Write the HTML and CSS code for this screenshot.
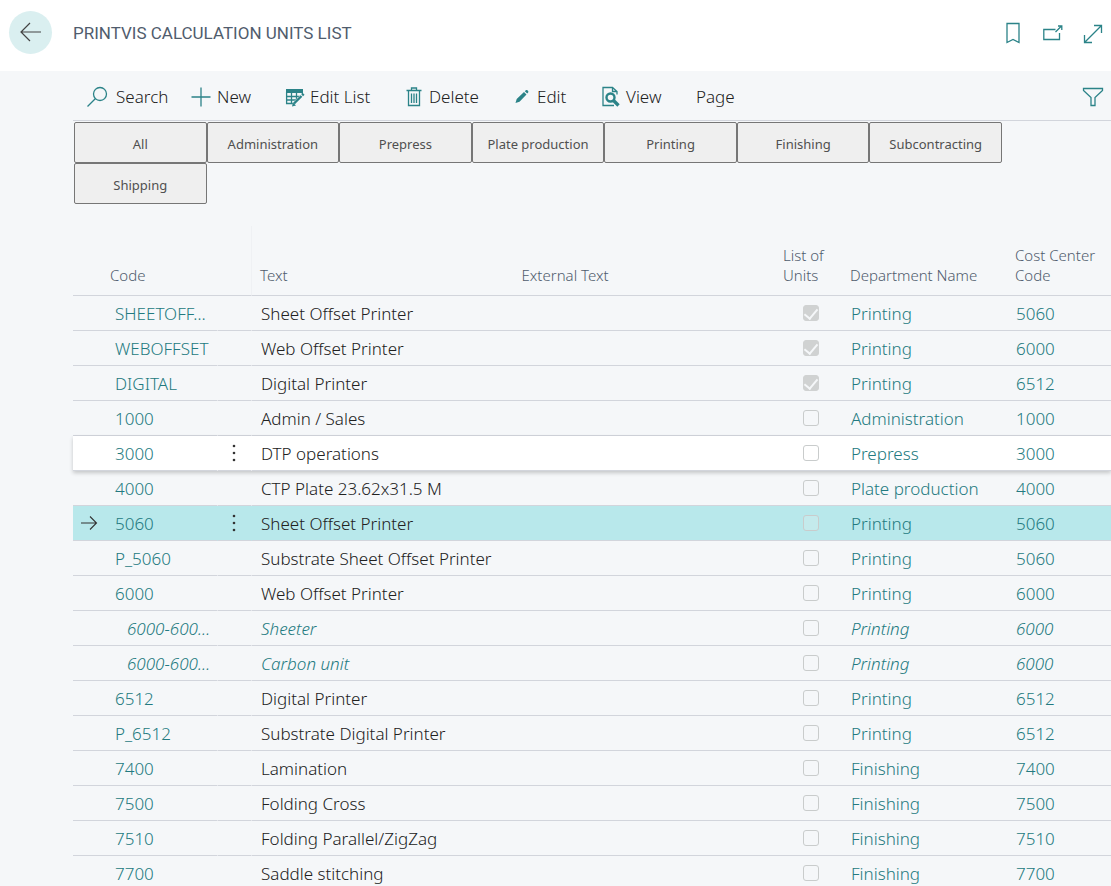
FILE: index.html
```html
<!DOCTYPE html>
<html lang="en">

<head>
    <meta charset="utf-8">
    <title>PrintVis Calculation Units List</title>
    <link rel="stylesheet" href="styles.css">
</head>

<body>
    <header class="page-header">
        <button class="back" aria-label="Back">
            <svg width="22" height="20" viewBox="0 0 22 20"><path d="M21 10H1.5M10 1L1 10l9 9" /></svg>
        </button>
        <h1>PRINTVIS CALCULATION UNITS LIST</h1>
        <div class="window-tools">
            <button aria-label="Bookmark">
                <svg width="20" height="22" viewBox="0 0 20 22"><path d="M4 1.5h12v19l-6-3-6 3z" /></svg>
            </button>
            <button aria-label="Open in new window">
                <svg width="20" height="22" viewBox="0 0 20 22"><path d="M12.500 7.500H.8v10h15.700v-6.500M12.500 10l6-6M15 4h3.800v4" /></svg>
            </button>
            <button aria-label="Expand">
                <svg width="20" height="22" viewBox="0 0 20 22"><path d="M2 20L18 4M11 3.500h7.500V11M1.500 13v7.500H9" /></svg>
            </button>
        </div>
    </header>

    <main>
        <div class="toolbar">
            <button class="search">
                <svg width="22" height="22" viewBox="0 0 22 22"><circle cx="14" cy="8" r="6.500" /><path d="M9.500 12.500L1.500 20.500" /></svg>
                Search
            </button>
            <button class="new">
                <svg width="20" height="22" viewBox="0 0 20 22"><path d="M10 1.500v19M.5 11h19" /></svg>
                New
            </button>
            <button class="edit-list">
                <svg width="20" height="22" viewBox="0 0 20 22">
                    <path class="fill" d="M1 3h17v4H1z" />
                    <path d="M1.600 6v11.500H9M1.500 10.500h15M1.500 14h11M6.500 7v11M11.500 7v8M17.300 6v3" />
                    <path class="halo" d="M9 18.500L18 9.500" />
                    <path class="thick" d="M9 17.500L16.500 10M17.200 9.300l1.500-1.500" />
                    <path class="fill" d="M7 20.500l1-4 3 3z" />
                </svg>
                Edit List
            </button>
            <button class="delete">
                <svg width="16" height="22" viewBox="0 0 16 22"><path d="M.5 4.500h15M5.500 4V2h5v2M2.500 5v14.500h11V5M5.500 7.500v9.500M8 7.500v9.500M10.500 7.500v9.500" /></svg>
                Delete
            </button>
            <button class="edit">
                <svg width="14" height="22" viewBox="0 0 14 22"><path class="fill" d="M.5 17l1.200-4L9 6l2.500 2.500-7 7.200zM9.800 5.200l1-1c1.200-.8 3.200.8 2.400 2.300l-1 1.100z" /></svg>
                Edit
            </button>
            <button class="view">
                <svg width="18" height="22" viewBox="0 0 18 22">
                    <path d="M12 19.500H1V1.500h9.500l4.500 4v3M10.500 1.500v4H15" />
                    <circle class="thick" cx="8.500" cy="11.500" r="4" />
                    <path class="handle" d="M11.500 14.500l5 5" />
                </svg>
                View
            </button>
            <button class="page">Page</button>
            <button class="filter" aria-label="Filter">
                <svg width="22" height="22" viewBox="0 0 22 22"><path d="M1.500 2.500h19v2l-7.500 7V19.500H9V11.500l-7.500-7z" /></svg>
            </button>
        </div>

        <div class="departments">
            <button>All</button>
            <button>Administration</button>
            <button>Prepress</button>
            <button>Plate production</button>
            <button>Printing</button>
            <button>Finishing</button>
            <button>Subcontracting</button>
            <button>Shipping</button>
        </div>

        <table>
            <colgroup>
                <col class="col-marker">
                <col class="col-code">
                <col class="col-menu">
                <col>
                <col>
                <col class="col-list">
                <col class="col-dept">
                <col class="col-cost">
            </colgroup>
            <thead>
                <tr>
                    <th></th>
                    <th>Code</th>
                    <th class="menu"></th>
                    <th>Text</th>
                    <th>External Text</th>
                    <th>List of Units</th>
                    <th>Department Name</th>
                    <th>Cost Center Code</th>
                </tr>
            </thead>
            <tbody id="units"></tbody>
        </table>
    </main>

    <script>
        // code, text, list of units, department, cost center, row class
        var units = [
            ["SHEETOFF…", "Sheet Offset Printer", true, "Printing", "5060"],
            ["WEBOFFSET", "Web Offset Printer", true, "Printing", "6000"],
            ["DIGITAL", "Digital Printer", true, "Printing", "6512"],
            ["1000", "Admin / Sales", false, "Administration", "1000"],
            ["3000", "DTP operations", false, "Prepress", "3000", "hovered"],
            ["4000", "CTP Plate 23.62x31.5 M", false, "Plate production", "4000"],
            ["5060", "Sheet Offset Printer", false, "Printing", "5060", "selected"],
            ["P_5060", "Substrate Sheet Offset Printer", false, "Printing", "5060"],
            ["6000", "Web Offset Printer", false, "Printing", "6000"],
            ["6000-600…", "Sheeter", false, "Printing", "6000", "child"],
            ["6000-600…", "Carbon unit", false, "Printing", "6000", "child"],
            ["6512", "Digital Printer", false, "Printing", "6512"],
            ["P_6512", "Substrate Digital Printer", false, "Printing", "6512"],
            ["7400", "Lamination", false, "Finishing", "7400"],
            ["7500", "Folding Cross", false, "Finishing", "7500"],
            ["7510", "Folding Parallel/ZigZag", false, "Finishing", "7510"],
            ["7700", "Saddle stitching", false, "Finishing", "7700"]
        ];

        var arrow = '<svg width="18" height="16" viewBox="0 0 18 16"><path d="M1 8h15.500M10 1.500L16.500 8 10 14.500"/></svg>';
        var dots = '<button class="more" aria-label="More options"><svg width="4" height="20" viewBox="0 0 4 20">' +
            '<circle cx="2" cy="3" r="1.300"/><circle cx="2" cy="10" r="1.300"/><circle cx="2" cy="17" r="1.300"/></svg></button>';

        document.getElementById("units").innerHTML = units.map(([code, text, list, dept, cost, state = ""]) => `
            <tr class="${state}">
                <td class="marker">${state == "selected" ? arrow : ""}</td>
                <td class="code"><a href="#">${code}</a></td>
                <td class="menu">${state == "selected" || state == "hovered" ? dots : ""}</td>
                <td>${text}</td>
                <td></td>
                <td class="list"><input type="checkbox" aria-label="List of Units ${code}" disabled ${list ? "checked" : ""}></td>
                <td><a href="#">${dept}</a></td>
                <td><a href="#">${cost}</a></td>
            </tr>`).join("");
    </script>
</body>

</html>
```
FILE: styles.css
```css
* {
    box-sizing: border-box;
}

body {
    margin: 0;
    height: 100vh;
    overflow: hidden;
    background-color: #f5f7f9;
    color: #212121;
    font-family: "Noto Sans", "Open Sans", sans-serif;
    font-weight: 300;
    font-size: 17px;
}

button {
    border: 0;
    padding: 0;
    background: none;
    color: inherit;
    font: inherit;
    cursor: pointer;
}

svg {
    display: block;
    flex: none;
    fill: none;
    stroke: #2b8388;
    stroke-width: 1.3;
}

svg .fill {
    fill: #2b8388;
    stroke: none;
}

svg .thick {
    stroke-width: 2.4;
}

svg .handle {
    stroke-width: 3.4;
}

svg .halo {
    stroke: #f5f7f9;
    stroke-width: 4.5;
}

a {
    color: #237a80;
    text-decoration: none;
}

.page-header {
    display: flex;
    align-items: center;
    height: 71px;
    padding: 0 8px 7px 9px;
    background-color: #fff;
}

.back {
    display: flex;
    align-items: center;
    justify-content: center;
    width: 43px;
    height: 43px;
    border-radius: 50%;
    background-color: #daeff0;
}

.back svg {
    stroke: #444;
    stroke-width: 1.2;
}

h1 {
    margin: 0 auto 0 21px;
    padding-top: 1px;
    color: #505c6d;
    font-family: Roboto, sans-serif;
    font-weight: 400;
    font-size: 17px;
}

.window-tools {
    display: flex;
    gap: 20px;
    padding-top: 2px;
}

main {
    padding-left: 73px;
}

.toolbar {
    display: flex;
    align-items: center;
    height: 50px;
    padding: 2px 7px 0 13px;
    border-bottom: 1px solid #d2d5dc;
}

.toolbar button {
    display: flex;
    align-items: center;
    gap: 6px;
}

.toolbar .search {
    gap: 8px;
    width: 105px;
}

.toolbar .new {
    width: 94px;
}

.toolbar .edit-list {
    gap: 5px;
    width: 121px;
}

.toolbar .delete {
    gap: 7px;
    width: 109px;
}

.toolbar .edit {
    gap: 8px;
    width: 87px;
}

.toolbar .view {
    width: 94px;
}

.toolbar .filter {
    margin-left: auto;
}

.departments {
    display: grid;
    grid-template-columns: repeat(7, 1fr);
    margin: 1px 109px 22px 1px;
}

.departments button {
    height: 41px;
    border: 1px solid #767676;
    border-radius: 2px;
    padding-top: 2px;
    background-color: #efefef;
    color: #505050;
    font-size: 13px;
    font-weight: 400;
}

table {
    width: 100%;
    table-layout: fixed;
    border-spacing: 0;
}

.col-marker {
    width: 37px;
}

.col-code {
    width: 108px;
}

.col-menu {
    width: 34px;
}

.col-list {
    width: 67px;
}

.col-dept {
    width: 165px;
}

.col-cost {
    width: 104px;
}

th {
    height: 70px;
    border-bottom: 1px solid #d2d5dc;
    padding: 0 8px 10px;
    color: #505c6d;
    font-size: 15px;
    font-weight: 300;
    line-height: 20px;
    text-align: left;
    vertical-align: bottom;
}

th:nth-child(2) {
    padding-left: 0;
}

th.menu {
    border-right: 1px solid #eff1f4;
}

td {
    height: 35px;
    border-bottom: 1px solid #d2d5dc;
    padding: 2px 9px 0;
    line-height: 24px;
    white-space: nowrap;
}

td.marker {
    padding: 0 0 0 7px;
}

.marker svg {
    stroke: #333;
    stroke-width: 1.1;
}

td.code {
    border-right: 1px solid #f5f7f9;
    padding: 2px 0 0 5px;
}

td.menu {
    border-right: 1px solid #f5f7f9;
    padding: 0 0 0 14px;
}

.more {
    display: block;
}

.more svg {
    fill: #333;
    stroke: none;
}

td.list {
    padding: 0 0 1px 28px;
}

input[type="checkbox"] {
    display: block;
    appearance: none;
    width: 16px;
    height: 16px;
    margin: 0;
    border: 1px solid #c9cccc;
    border-radius: 3px;
}

input[type="checkbox"]:checked {
    display: flex;
    justify-content: center;
    border-color: #d0d2d2;
    background-color: #d0d2d2;
}

input[type="checkbox"]:checked::before {
    content: "";
    width: 6px;
    height: 11px;
    border: solid #f5f7f9;
    border-width: 0 2px 2px 0;
    transform: rotate(40deg);
}

.hovered {
    position: relative;
    background-color: #fff;
    box-shadow: 0 2px 4px rgba(0, 0, 0, 0.2);
}

.hovered .code,
.hovered .menu {
    border-right-color: #fff;
}

.selected {
    background-color: #b8e8eb;
}

.selected .code,
.selected .menu {
    border-right-color: #b8e8eb;
}

.selected input[type="checkbox"] {
    background-color: #c4eaec;
}

.child {
    color: #237a80;
    font-style: italic;
}

.child .code {
    padding-left: 17px;
}
```
